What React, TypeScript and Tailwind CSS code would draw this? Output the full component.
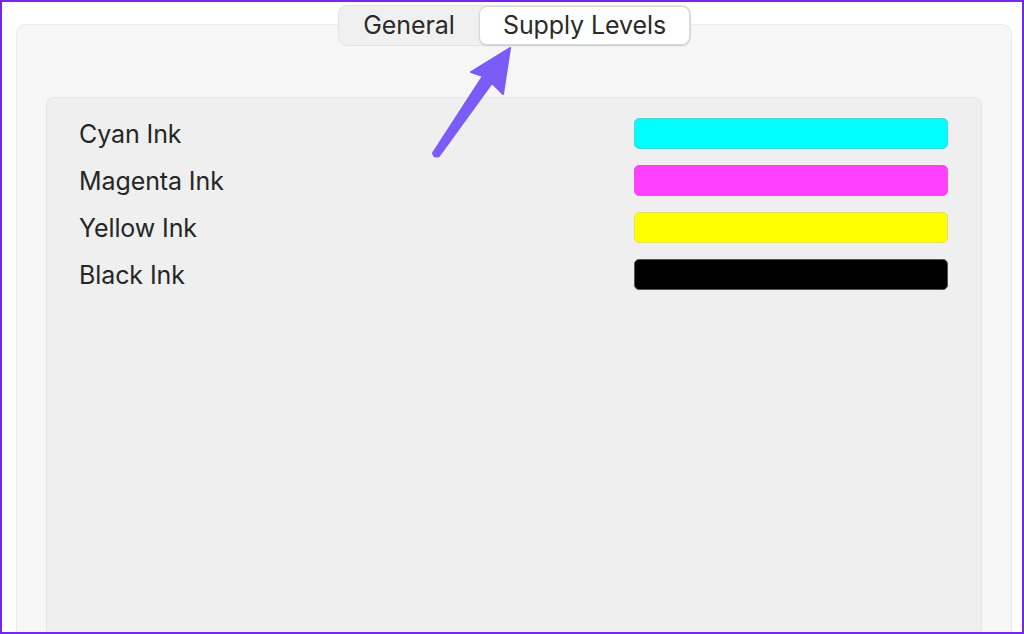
import React from "react";

const inks = [
  { name: "Cyan Ink", color: "bg-[#00ffff]", border: "border-[#3fd9e0]" },
  { name: "Magenta Ink", color: "bg-[#ff40ff]", border: "border-[#f04ff0]" },
  { name: "Yellow Ink", color: "bg-[#ffff00]", border: "border-[#e6e05a]" },
  { name: "Black Ink", color: "bg-[#000000]", border: "border-[#555555]" },
];

export default function App() {
  return (
    <div
      className="relative w-[1024px] h-[634px] overflow-hidden bg-white border-2 border-[#7627ef] flex flex-col text-[#262626]"
      style={{ fontFamily: "Inter, 'Noto Sans', sans-serif" }}
    >
      {/* outer panel */}
      <div className="ml-[14px] mr-[10px] mt-[22px] flex-1 flex flex-col bg-[#f6f6f6] border border-[#ebebeb] border-b-0 rounded-t-[10px]">
        {/* inner panel */}
        <div className="ml-[29px] mr-[29px] mt-[72px] flex-1 bg-[#efefef] border border-[#e6e6e6] border-b-0 rounded-t-[8px] pt-[20px] pl-[32px] pr-[33px]">
          <div className="flex flex-col gap-[17px]">
            {inks.map((ink) => (
              <div key={ink.name} className="flex items-center justify-between h-[30px]">
                <span className="text-[25px] leading-none pt-[3px] tracking-[-0.1px]">{ink.name}</span>
                <div className={`w-[314px] h-[31px] rounded-[5px] border ${ink.color} ${ink.border}`} />
              </div>
            ))}
          </div>
        </div>
      </div>

      {/* segmented tab control */}
      <div className="absolute left-[336px] top-[3px] w-[353px] h-[41px] flex items-center bg-[#f0f0f0] border border-[#e3e3e3] rounded-[9px]">
        <div className="w-[140px] h-full flex items-center justify-center text-[25px] text-[#2a2a2a] tracking-[-0.1px]">
          General
        </div>
        <div className="flex-1 h-[39px] flex items-center justify-center text-[25px] text-[#2a2a2a] tracking-[-0.1px] bg-white rounded-[8px] border border-[#d9d9d9] shadow-[0_1px_2px_rgba(0,0,0,0.12)]">
          Supply Levels
        </div>
      </div>

      {/* annotation arrow */}
      <svg className="absolute left-0 top-0" width="1024" height="634" viewBox="0 0 1024 634">
        <path
          d="M508 46 L469 70 L481 74 L431 151 Q432 156 437 154 L490 81 L501 92 Z"
          fill="#7b5cf8"
          stroke="#7b5cf8"
          strokeWidth="2"
          strokeLinejoin="round"
        />
      </svg>
    </div>
  );
}
